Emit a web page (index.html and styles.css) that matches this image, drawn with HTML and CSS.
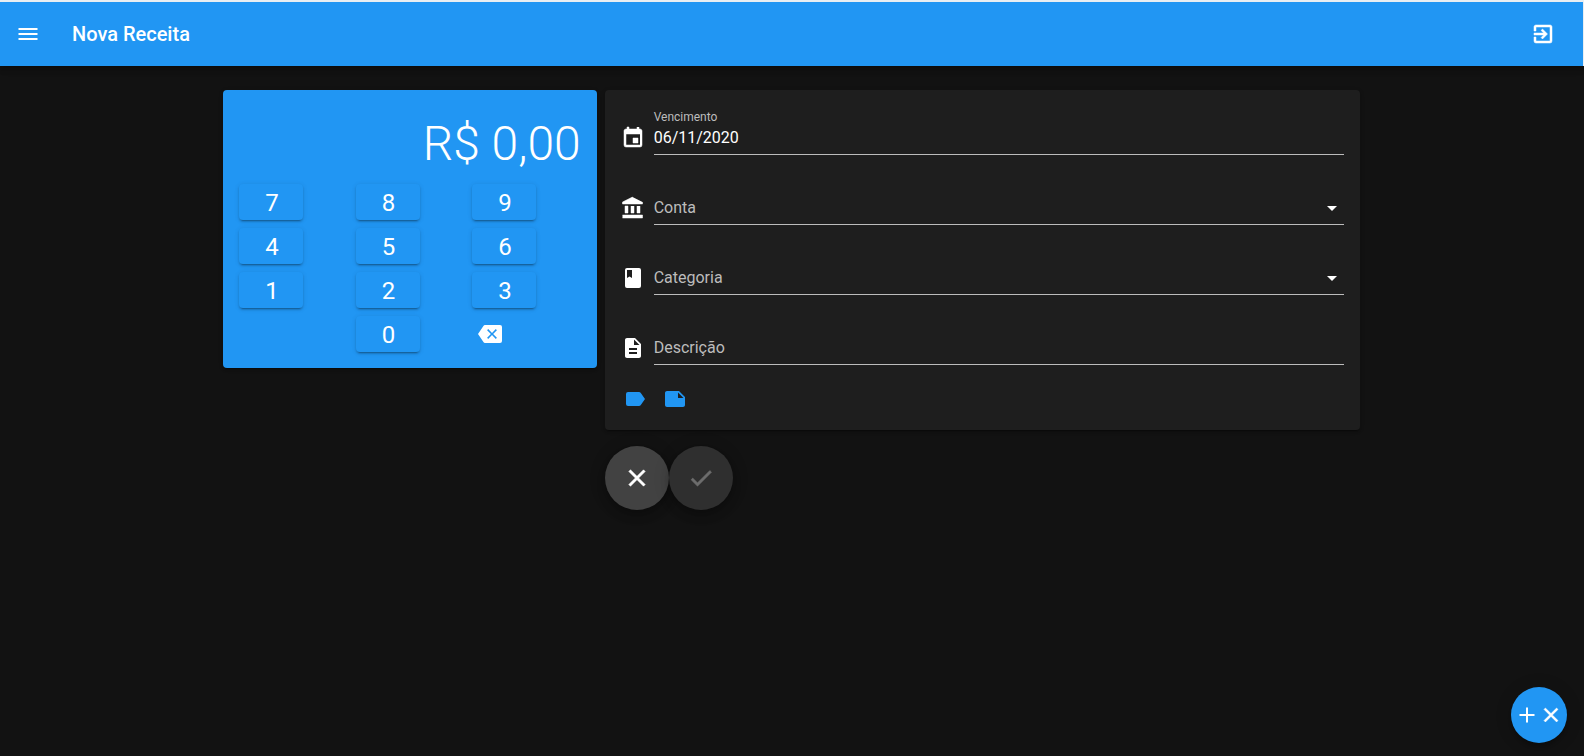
FILE: index.html
```html
<!DOCTYPE html>
<html lang="pt-BR">
<head>
<meta charset="utf-8">
<title>Nova Receita</title>
<link rel="stylesheet" href="styles.css">
</head>
<body>
<header class="app-bar">
  <button class="icon-btn" type="button" aria-label="Menu"><svg class="icon" viewBox="0 0 24 24"><path d="M2.5,6H21.5V8H2.5V6M2.5,11H21.5V13H2.5V11M2.5,16H21.5V18H2.5V16Z"/></svg></button>
  <h1 class="app-title">Nova Receita</h1>
  <button class="icon-btn" type="button" aria-label="Sair"><svg class="icon bold" viewBox="0 0 24 24"><path d="M19,3H5C3.89,3 3,3.89 3,5V9H5V5H19V19H5V15H3V19A2,2 0 0,0 5,21H19A2,2 0 0,0 21,19V5C21,3.89 20.1,3 19,3M10.08,15.58L11.5,17L16.5,12L11.5,7L10.08,8.41L12.67,11H3V13H12.67L10.08,15.58Z"/></svg></button>
</header>
<main class="container">
  <div class="row">
    <div class="col-calc">
      <section class="card calc">
        <output class="amount">R$ 0,00</output>
        <div class="keys">
          <div class="key-cell"><button class="key" type="button">7</button></div>
          <div class="key-cell"><button class="key" type="button">8</button></div>
          <div class="key-cell"><button class="key" type="button">9</button></div>
          <div class="key-cell"><button class="key" type="button">4</button></div>
          <div class="key-cell"><button class="key" type="button">5</button></div>
          <div class="key-cell"><button class="key" type="button">6</button></div>
          <div class="key-cell"><button class="key" type="button">1</button></div>
          <div class="key-cell"><button class="key" type="button">2</button></div>
          <div class="key-cell"><button class="key" type="button">3</button></div>
          <div class="key-cell"></div>
          <div class="key-cell"><button class="key" type="button">0</button></div>
          <div class="key-cell"><button class="icon-btn small" type="button" aria-label="Apagar"><svg class="icon" viewBox="0 0 24 24"><path d="M22,3H7C6.31,3 5.77,3.35 5.41,3.88L0,12L5.41,20.11C5.77,20.64 6.31,21 7,21H22A2,2 0 0,0 24,19V5A2,2 0 0,0 22,3M18.9,15.8L17.8,16.9L14,13.1L10.2,16.9L9.1,15.8L12.9,12L9.1,8.2L10.2,7.1L14,10.9L17.8,7.1L18.9,8.2L15.1,12"/></svg></button></div>
        </div>
      </section>
    </div>
    <form class="col-form">
      <section class="card form-card">
        <div class="field">
          <svg class="icon bold" viewBox="0 0 24 24"><path d="M19,19H5V8H19M16,1V3H8V1H6V3H5C3.89,3 3,3.89 3,5V19A2,2 0 0,0 5,21H19A2,2 0 0,0 21,19V5C21,3.89 20.1,3 19,3H18V1M17,12H12V17H17V12Z"/></svg>
          <div class="slot">
            <label class="float-label" for="vencimento">Vencimento</label>
            <input class="control" id="vencimento" type="text" value="06/11/2020">
          </div>
        </div>
        <div class="field">
          <svg class="icon bold" viewBox="0 0 24 24"><path d="M11.5,1L1.5,6V8H21.5V6M16,10V17H19V10M1.5,22H21.5V19H1.5M10,10V17H13V10M4,10V17H7V10H4Z"/></svg>
          <div class="slot">
            <select class="control" id="conta" aria-label="Conta"><option>Conta</option></select>
            <svg class="icon caret" viewBox="0 0 24 24"><path d="M7,10L12,15L17,10H7Z"/></svg>
          </div>
        </div>
        <div class="field">
          <svg class="icon" viewBox="0 0 24 24"><path d="M6.012,2H18A2,2 0 0,1 20,4V20A2,2 0 0,1 18,22H6A2,2 0 0,1 4,20V4A2,2 0 0,1 6,2M6,4V12L8.5,10.5L11,12V4H6Z"/></svg>
          <div class="slot">
            <select class="control" id="categoria" aria-label="Categoria"><option>Categoria</option></select>
            <svg class="icon caret" viewBox="0 0 24 24"><path d="M7,10L12,15L17,10H7Z"/></svg>
          </div>
        </div>
        <div class="field">
          <svg class="icon" viewBox="0 0 24 24"><path d="M14 2H6c-1.1 0-1.99.9-1.99 2L4 20c0 1.1.89 2 1.99 2H18c1.1 0 2-.9 2-2V8l-6-6zm2 16H8v-2h8v2zm0-4H8v-2h8v2zm-3-5V3.5L18.5 9H13z"/></svg>
          <div class="slot">
            <input class="control" id="descricao" type="text" placeholder="Descrição" aria-label="Descrição">
          </div>
        </div>
        <div class="extras">
          <button class="icon-btn small accent" type="button" aria-label="Etiqueta"><svg class="icon" viewBox="0 0 24 24"><path d="M17.63,5.84C17.27,5.33 16.67,5 16,5H5A2,2 0 0,0 3,7V17A2,2 0 0,0 5,19H16C16.67,19 17.27,18.66 17.63,18.15L22,12L17.63,5.84Z"/></svg></button>
          <button class="icon-btn small accent" type="button" aria-label="Nota"><svg class="icon" viewBox="0 0 24 24"><path d="M22 10l-6-6H4c-1.1 0-2 .9-2 2v12.01c0 1.1.9 1.99 2 1.99l16-.01c1.1 0 2-.89 2-2v-8zm-7-4.5l5.5 5.5H15V5.5z"/></svg></button>
        </div>
      </section>
      <div class="actions">
        <button class="fab cancel" type="button" aria-label="Cancelar"><svg class="icon large bold" viewBox="0 0 24 24"><path d="M19,6.41L17.59,5L12,10.59L6.41,5L5,6.41L10.59,12L5,17.59L6.41,19L12,13.41L17.59,19L19,17.59L13.41,12L19,6.41Z"/></svg></button>
        <button class="fab confirm" type="submit" aria-label="Confirmar" disabled><svg class="icon large bold" viewBox="0 0 24 24"><path d="M21,7L9,19L3.5,13.5L4.91,12.09L9,16.17L19.59,5.59L21,7Z"/></svg></button>
      </div>
    </form>
  </div>
</main>
<button class="fab add" type="button" aria-label="Adicionar">
  <svg class="icon" viewBox="0 0 24 24"><path d="M19.5,13H13V19.5H11V13H4.5V11H11V4.5H13V11H19.5V13Z"/></svg>
  <svg class="icon bold" viewBox="0 0 24 24"><path d="M19,6.41L17.59,5L12,10.59L6.41,5L5,6.41L10.59,12L5,17.59L6.41,19L12,13.41L17.59,19L19,17.59L13.41,12L19,6.41Z"/></svg>
</button>
</body>
</html>
```
FILE: styles.css
```css
* {
  box-sizing: border-box;
}

body {
  margin: 0;
  min-height: 100vh;
  background: #121212;
  color: #fff;
  font-family: Roboto, "Liberation Sans", sans-serif;
  font-size: 16px;
  line-height: 24px;
}

button,
input,
select {
  font: inherit;
  color: inherit;
}

button {
  display: inline-flex;
  align-items: center;
  justify-content: center;
  padding: 0;
  border: 0;
  background: none;
  cursor: pointer;
}

.icon {
  display: block;
  flex: none;
  width: 24px;
  height: 24px;
  fill: currentColor;
}

.icon.bold {
  stroke: currentColor;
  stroke-width: 0.5;
}

.icon.large {
  width: 28px;
  height: 28px;
}

.icon-btn {
  width: 48px;
  height: 48px;
  border-radius: 50%;
}

.icon-btn.small {
  width: 36px;
  height: 36px;
}

.accent {
  color: #2196f3;
}

.app-bar {
  display: flex;
  align-items: center;
  height: 66px;
  padding: 0 16px 0 4px;
  border-top: 2px solid #e8eef2;
  border-right: 1px solid #e8eef2;
  background: #2196f3;
  box-shadow: 0 2px 4px -1px rgba(0, 0, 0, 0.2), 0 4px 5px rgba(0, 0, 0, 0.14), 0 1px 10px rgba(0, 0, 0, 0.12);
}

.app-title {
  flex: 1;
  margin: 0;
  padding-left: 20px;
  font-size: 20px;
  font-weight: 500;
  line-height: 30px;
}

.container {
  max-width: 1186px;
  margin: 0 auto;
  padding: 24px 25px 24px 24px;
}

.row {
  display: grid;
  grid-template-columns: minmax(0, 1fr) minmax(0, 2fr);
  align-items: start;
  margin: 0 -4px;
}

.col-calc,
.col-form {
  padding: 0 4px;
}

.card {
  border-radius: 4px;
  box-shadow: 0 3px 1px -2px rgba(0, 0, 0, 0.2), 0 2px 2px rgba(0, 0, 0, 0.14), 0 1px 5px rgba(0, 0, 0, 0.12);
}

.calc {
  padding: 28px 16px 16px;
  background: #2196f3;
}

.amount {
  display: block;
  margin-bottom: 14px;
  font-size: 48px;
  font-weight: 300;
  line-height: 52px;
  text-align: right;
}

.keys {
  display: grid;
  grid-template-columns: repeat(3, minmax(0, 1fr));
  row-gap: 8px;
  margin: 0 -4px;
}

.key-cell {
  display: flex;
  height: 36px;
  padding: 0 4px;
}

.key {
  width: 64px;
  height: 36px;
  padding: 2px 0 0 2px;
  border-radius: 4px;
  background: #2196f3;
  font-size: 24px;
  line-height: 32px;
  box-shadow: 0 3px 1px -2px rgba(0, 0, 0, 0.2), 0 2px 2px rgba(0, 0, 0, 0.14), 0 1px 5px rgba(0, 0, 0, 0.12);
}

.form-card {
  padding: 15px 16px 17px;
  background: #1e1e1e;
}

.field {
  display: flex;
  align-items: center;
  gap: 9px;
  padding-top: 16px;
  margin-bottom: 20px;
}

.slot {
  position: relative;
  flex: 1;
  min-width: 0;
}

.control {
  display: block;
  width: 100%;
  height: 34px;
  margin: 0;
  padding: 0 0 1px;
  border: 0;
  border-bottom: 1px solid #bcbcbc;
  border-radius: 0;
  outline: 0;
  background: none;
  appearance: none;
}

select.control {
  padding: 1px 0 0;
}

select.control,
.control::placeholder {
  color: #bcbcbc;
  opacity: 1;
}

.float-label {
  position: absolute;
  top: -10px;
  left: 0;
  color: #bcbcbc;
  font-size: 12px;
  line-height: 12px;
}

.caret {
  position: absolute;
  top: 5px;
  right: 0;
  pointer-events: none;
}

.extras {
  display: flex;
  gap: 4px;
  margin: -4px;
}

.actions {
  display: flex;
  padding-top: 16px;
}

.fab {
  width: 64px;
  height: 64px;
  border-radius: 50%;
  box-shadow: 0 3px 5px -1px rgba(0, 0, 0, 0.2), 0 6px 10px rgba(0, 0, 0, 0.14), 0 1px 18px rgba(0, 0, 0, 0.12);
}

.cancel {
  background: #424242;
}

.confirm {
  background: #2f2f2f;
  color: #6d6d6d;
}

.add {
  position: fixed;
  right: 17px;
  bottom: 13px;
  width: 56px;
  height: 56px;
  background: #2196f3;
}
```
